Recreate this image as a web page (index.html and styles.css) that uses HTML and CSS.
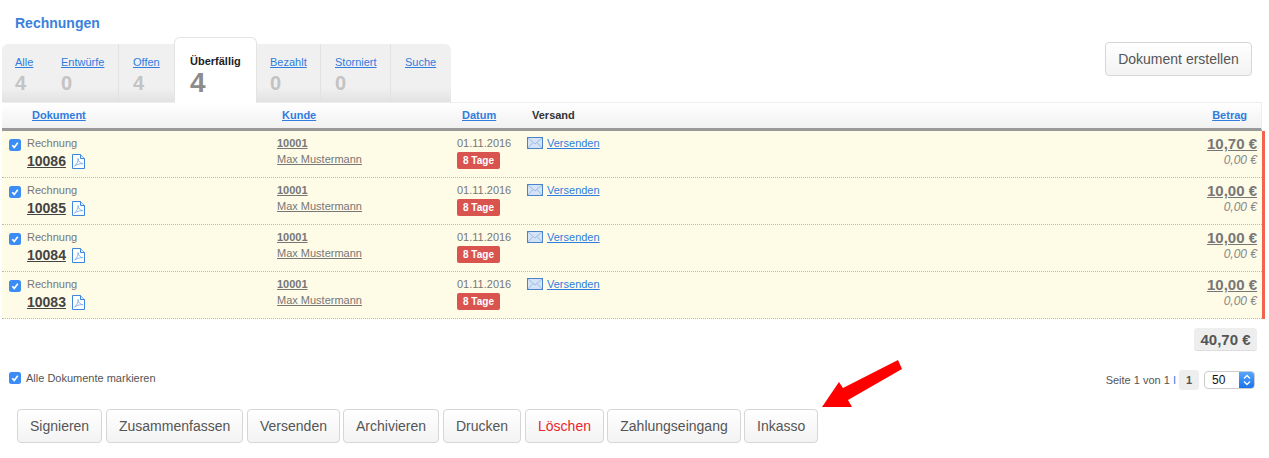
FILE: index.html
```html
<!DOCTYPE html>
<html lang="de">
<head>
<meta charset="utf-8">
<title>Rechnungen</title>
<link rel="stylesheet" href="styles.css">
</head>
<body>
<svg class="defs" width="0" height="0" aria-hidden="true">
  <symbol id="check" viewBox="0 0 12 12"><rect width="12" height="12" rx="2.5" fill="#3b8df5"/><path d="M3.3 6.3 5.2 8.4 8.8 3.7" fill="none" stroke="#fff" stroke-width="1.7"/></symbol>
  <symbol id="pdf" viewBox="0 0 13 15"><path d="M.5.5h8l4 4v10H.5z" fill="#fff" stroke="#3d86e0"/><path d="M8.500.5v4h4" fill="#dbe9fa" stroke="#3d86e0"/><path d="M2.500 12C4.800 10.500 6.200 7.500 6 4.500 6.500 7.500 8 9.300 10.800 9.700 8 9.700 5.200 10.200 2.500 12z" fill="none" stroke="#6ea6ea" stroke-width=".8"/></symbol>
  <symbol id="mail" viewBox="0 0 16 12"><rect x=".5" y=".5" width="15" height="11" fill="#d5e3f6" stroke="#4a83c9"/><path d="M1 1l7 6 7-6M1 11l5-5.500M15 11l-5-5.500" fill="none" stroke="#8fb2e0" stroke-width=".8"/></symbol>
</svg>
<main class="page">
  <header class="top">
    <h1 class="title">Rechnungen</h1>
    <div class="tabbar">
      <nav class="tabs">
        <div class="tab tab-alle"><a href="#">Alle</a><b>4</b></div>
        <div class="tab tab-entwurf"><a href="#">Entwürfe</a><b>0</b></div>
        <div class="tab tab-offen"><a href="#">Offen</a><b>4</b></div>
        <div class="tab tab-active"><span>Überfällig</span><b>4</b></div>
        <div class="tab tab-bezahlt"><a href="#">Bezahlt</a><b>0</b></div>
        <div class="tab tab-storniert"><a href="#">Storniert</a><b>0</b></div>
        <div class="tab tab-suche"><a href="#">Suche</a></div>
      </nav>
      <button class="btn btn-create">Dokument erstellen</button>
    </div>
  </header>

  <section class="list">
    <div class="grid head">
      <span></span><a href="#">Dokument</a><a href="#">Kunde</a><a href="#">Datum</a><span class="plain">Versand</span><a class="right" href="#">Betrag</a>
    </div>
    <div class="rows">
      <div class="grid row">
        <svg class="cb"><use href="#check"/></svg>
        <div class="doc"><span class="kind">Rechnung</span><span class="num"><u>10086</u><svg class="pdf"><use href="#pdf"/></svg></span></div>
        <div class="cust"><u class="cid">10001</u><u>Max Mustermann</u></div>
        <div class="date"><span>01.11.2016</span><span class="late">8 Tage</span></div>
        <div class="send"><svg class="mail"><use href="#mail"/></svg><a href="#">Versenden</a></div>
        <div class="amt"><u>10,70 €</u><i>0,00 €</i></div>
      </div>
      <div class="grid row">
        <svg class="cb"><use href="#check"/></svg>
        <div class="doc"><span class="kind">Rechnung</span><span class="num"><u>10085</u><svg class="pdf"><use href="#pdf"/></svg></span></div>
        <div class="cust"><u class="cid">10001</u><u>Max Mustermann</u></div>
        <div class="date"><span>01.11.2016</span><span class="late">8 Tage</span></div>
        <div class="send"><svg class="mail"><use href="#mail"/></svg><a href="#">Versenden</a></div>
        <div class="amt"><u>10,00 €</u><i>0,00 €</i></div>
      </div>
      <div class="grid row">
        <svg class="cb"><use href="#check"/></svg>
        <div class="doc"><span class="kind">Rechnung</span><span class="num"><u>10084</u><svg class="pdf"><use href="#pdf"/></svg></span></div>
        <div class="cust"><u class="cid">10001</u><u>Max Mustermann</u></div>
        <div class="date"><span>01.11.2016</span><span class="late">8 Tage</span></div>
        <div class="send"><svg class="mail"><use href="#mail"/></svg><a href="#">Versenden</a></div>
        <div class="amt"><u>10,00 €</u><i>0,00 €</i></div>
      </div>
      <div class="grid row">
        <svg class="cb"><use href="#check"/></svg>
        <div class="doc"><span class="kind">Rechnung</span><span class="num"><u>10083</u><svg class="pdf"><use href="#pdf"/></svg></span></div>
        <div class="cust"><u class="cid">10001</u><u>Max Mustermann</u></div>
        <div class="date"><span>01.11.2016</span><span class="late">8 Tage</span></div>
        <div class="send"><svg class="mail"><use href="#mail"/></svg><a href="#">Versenden</a></div>
        <div class="amt"><u>10,00 €</u><i>0,00 €</i></div>
      </div>
    </div>
  </section>

  <div class="total"><span>40,70 €</span></div>

  <div class="tools">
    <label class="all"><svg class="cb"><use href="#check"/></svg>Alle Dokumente markieren</label>
    <div class="pager">
      <span>Seite 1 von 1 <em>I</em></span>
      <span class="pg">1</span>
      <span class="sel"><span class="val">50</span><span class="step"><svg width="8" height="12" viewBox="0 0 8 12"><path d="M1 4.500 4 1.500l3 3M1 7.500l3 3 3-3" fill="none" stroke="#fff" stroke-width="1.300"/></svg></span></span>
    </div>
  </div>

  <div class="actions">
    <button class="btn">Signieren</button>
    <button class="btn">Zusammenfassen</button>
    <button class="btn">Versenden</button>
    <button class="btn">Archivieren</button>
    <button class="btn">Drucken</button>
    <button class="btn btn-del">Löschen</button>
    <button class="btn">Zahlungseingang</button>
    <button class="btn">Inkasso</button>
  </div>

  <svg class="arrow" width="90" height="55" viewBox="0 0 90 55" aria-hidden="true"><path d="M0 47 17 22 21 28 76 0 80 9 26 40 30 47z" fill="#fe0000"/></svg>
</main>
</body>
</html>
```
FILE: styles.css
```css
* { box-sizing: border-box; }
html, body { margin: 0; padding: 0; }
body { background: #fff; font-family: "Liberation Sans", Arial, sans-serif; color: #555; overflow: hidden; }
.defs { position: absolute; }
.page { position: relative; width: 1269px; height: 458px; }
a { color: #2f7ddf; }

.top { padding: 15px 0 0 2px; }
.title { margin: 0 0 6px 13px; font-size: 14px; line-height: 16px; font-weight: bold; color: #3b7fdc; }
.tabbar { display: flex; justify-content: space-between; align-items: flex-start; height: 65px; }
.tabs { display: flex; align-items: flex-end; height: 65px; width: 449px; }
.tab { height: 58px; padding: 11px 0 0 13px; display: flex; flex-direction: column; font-size: 11px; line-height: 14px;
  background: linear-gradient(#f0f0f0 0, #f0f0f0 75%, #e2e2e2 100%); border-right: 1px solid #e2e2e2; }
.tab b { font-size: 20px; line-height: 24px; margin-top: 2px; color: #c3c3c3; }
.tab-alle { width: 46px; border-right: 0; border-top-left-radius: 6px; }
.tab-entwurf { width: 71px; }
.tab-offen { width: 55px; padding-left: 14px; border-right: 0; }
.tab-active { width: 83px; height: 66px; padding: 16px 0 0 15px; background: #fff; border: 1px solid #e4e4e4; border-bottom: 0; border-radius: 6px 6px 0 0; margin-bottom: -1px; position: relative; z-index: 2; color: #222; font-weight: bold; }
.tab-active b { font-size: 28px; line-height: 30px; color: #8c8c8c; margin-top: 0; }
.tab-bezahlt { width: 64px; }
.tab-storniert { width: 70px; padding-left: 14px; }
.tab-suche { width: 60px; padding-left: 14px; border-right: 0; border-top-right-radius: 6px; }
.btn { height: 34px; padding: 0 12px; font: 14px/20px "Liberation Sans", Arial, sans-serif; color: #555; background: linear-gradient(#fff, #f3f3f3); border: 1px solid #d6d6d6; border-radius: 4px; }
.btn-create { width: 147px; margin: 5px 17px 0 0; }

.list { margin-left: 2px; width: 1263px; }
.grid { display: grid; grid-template-columns: 25px 250px 180px 70px 1fr auto; }
.head { width: 1260px; height: 29px; padding-right: 14px; border: 1px solid #eee; border-width: 1px 1px 0 0; border-bottom: 3px solid #999; background: linear-gradient(#fff, #f1f1f1); font-size: 11px; line-height: 24px; font-weight: bold; position: relative; z-index: 1; }
.head > a, .head > .plain { padding-left: 5px; }
.head > .plain { color: #333; }
.head > .right { padding-left: 0; }
.rows { border-right: 3px solid #f1624f; }
.row { height: 47px; padding: 6px 5px 0 0; background: #fefbe7; border-bottom: 1px dotted #bbb; font-size: 11px; line-height: 13px; color: #777; }
.cb { width: 12px; height: 12px; margin: 2px 0 0 7px; }
.doc, .cust, .date, .amt { display: flex; flex-direction: column; }
.kind { height: 13px; }
.num { display: flex; align-items: center; margin-top: 3px; font-size: 14px; line-height: 17px; font-weight: bold; color: #444; }
.pdf { width: 13px; height: 15px; margin-left: 6px; }
.cust { color: #777; }
.cid { font-weight: bold; margin-bottom: 3px; }
.late { align-self: flex-start; margin-top: 2px; padding: 0 6px; height: 17px; font-size: 10px; line-height: 17px; font-weight: bold; color: #fff; background: #d9534f; border-radius: 2px; }
.send { display: flex; align-items: flex-start; }
.mail { width: 16px; height: 12px; margin-right: 4px; }
.amt { align-items: flex-end; margin-top: -1px; }
.amt u { font-size: 15px; line-height: 15px; font-weight: bold; color: #777; }
.amt i { font-size: 12px; line-height: 13px; color: #888; margin-top: 3px; }

.total { display: flex; justify-content: flex-end; padding: 9px 12px 0 0; }
.total span { width: 63px; height: 23px; text-align: center; font-size: 15px; line-height: 23px; font-weight: bold; color: #555; background: #eee; border-radius: 3px; border-bottom: 1px solid #ddd; }

.tools { display: flex; justify-content: space-between; align-items: center; height: 22px; margin-top: 16px; padding: 0 14px 0 2px; font-size: 11px; }
.all { display: flex; align-items: center; gap: 5px; color: #555; }
.all .cb { margin: 0 0 0 7px; }
.pager { display: flex; align-items: center; margin-top: 4px; color: #555; }
.pager em { font-style: normal; color: #3b7fdc; }
.pg { width: 20px; height: 20px; margin: 0 5px 0 3px; text-align: center; font-weight: bold; font-size: 11px; line-height: 20px; background: #eee; border-radius: 3px; }
.sel { display: flex; width: 51px; height: 18px; border: 1px solid #ccc; border-radius: 4px; overflow: hidden; background: #fff; color: #111; font-size: 12px; line-height: 16px; }
.val { flex: 1; padding-left: 7px; }
.step { width: 15px; display: flex; align-items: center; justify-content: center; background: linear-gradient(#58a6fb, #1a73ef); }

.actions { display: flex; gap: 3px; margin: 20px 0 0 17px; }
.actions .btn { flex: none; }
.actions .btn:nth-child(1) { width: 85px; }
.actions .btn:nth-child(2) { width: 137px; margin-left: 1px; }
.actions .btn:nth-child(3) { width: 93px; margin-left: 1px; }
.actions .btn:nth-child(4) { width: 96px; }
.actions .btn:nth-child(5) { width: 78px; margin-left: 1px; }
.actions .btn:nth-child(6) { width: 79px; margin-left: 1px; }
.actions .btn:nth-child(7) { width: 134px; }
.actions .btn:nth-child(8) { width: 74px; }
.btn-del { color: #e8262d; }
.arrow { position: absolute; left: 822px; top: 360px; }
```
